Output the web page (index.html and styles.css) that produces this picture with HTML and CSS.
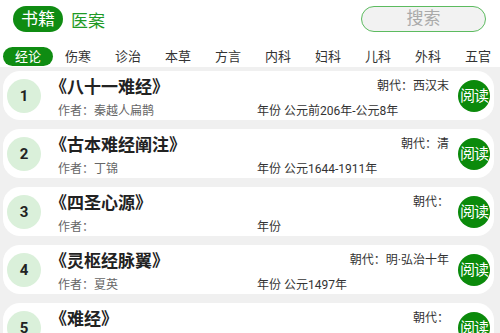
FILE: index.html
```html
<!DOCTYPE html>
<html lang="zh-CN">
<head>
    <meta charset="UTF-8">
    <meta name="viewport" content="width=device-width, initial-scale=1.0">
    <title>书籍</title>
    <link rel="stylesheet" href="styles.css">
</head>
<body>
    <div class="top">
        <div class="cat-on">书籍</div>
        <div class="cat">医案</div>
        <div class="search">搜索</div>
    </div>

    <div class="tabs">
        <div class="tab on">经论</div>
        <div class="tab">伤寒</div>
        <div class="tab">诊治</div>
        <div class="tab">本草</div>
        <div class="tab">方言</div>
        <div class="tab">内科</div>
        <div class="tab">妇科</div>
        <div class="tab">儿科</div>
        <div class="tab">外科</div>
        <div class="tab">五官</div>
    </div>

    <div class="list">
        <div class="card">
            <div class="num">1</div>
            <div class="info">
                <div class="title">《八十一难经》</div>
                <div class="dynasty">朝代：西汉末</div>
                <div class="author">作者：秦越人扁鹊</div>
                <div class="year">年份 公元前206年-公元8年</div>
            </div>
            <div class="read">阅读</div>
        </div>
        <div class="card">
            <div class="num">2</div>
            <div class="info">
                <div class="title">《古本难经阐注》</div>
                <div class="dynasty">朝代：清</div>
                <div class="author">作者：丁锦</div>
                <div class="year">年份 公元1644-1911年</div>
            </div>
            <div class="read">阅读</div>
        </div>
        <div class="card">
            <div class="num">3</div>
            <div class="info">
                <div class="title">《四圣心源》</div>
                <div class="dynasty">朝代：</div>
                <div class="author">作者：</div>
                <div class="year">年份</div>
            </div>
            <div class="read">阅读</div>
        </div>
        <div class="card">
            <div class="num">4</div>
            <div class="info">
                <div class="title">《灵枢经脉翼》</div>
                <div class="dynasty">朝代：明·弘治十年</div>
                <div class="author">作者：夏英</div>
                <div class="year">年份 公元1497年</div>
            </div>
            <div class="read">阅读</div>
        </div>
        <div class="card">
            <div class="num">5</div>
            <div class="info">
                <div class="title">《难经》</div>
                <div class="dynasty">朝代：</div>
                <div class="author">作者：</div>
                <div class="year">年份</div>
            </div>
            <div class="read">阅读</div>
        </div>
    </div>
</body>
</html>
```

FILE: styles.css
```css
body {
    margin: 0;
    width: 500px;
    height: 333px;
    overflow: hidden;
    background: #fff;
    font-family: Roboto, "Noto Sans CJK SC", sans-serif;
    color: #333;
}

/* top bar */
.top {
    display: flex;
    align-items: center;
    height: 26px;
    margin-top: 6px;
    padding: 0 14px 0 13px;
}
.cat-on {
    width: 50px;
    height: 26px;
    line-height: 26px;
    border-radius: 13px;
    background: #0f8c12;
    color: #fff;
    font-size: 17px;
    text-align: center;
}
.cat {
    margin-left: 8px;
    font-size: 17px;
    color: #1f9a26;
}
.search {
    margin-left: auto;
    width: 125px;
    height: 26px;
    line-height: 23px;
    box-sizing: border-box;
    border: 1.5px solid #5cbb5f;
    border-radius: 13px;
    background: #f2f2f2;
    color: #aaa;
    font-size: 17px;
    text-align: center;
}

/* category tabs */
.tabs {
    display: flex;
    margin: 15px 0 1px;
    padding-left: 3px;
    height: 19px;
    overflow: hidden;
}
.tab {
    flex: 0 0 50px;
    height: 19px;
    line-height: 19px;
    font-size: 13px;
    text-align: center;
    color: #333;
}
.tab.on {
    background: #0f8c12;
    color: #fff;
    border-radius: 10px;
}

/* book list */
.list {
    background: #f0f0f0;
    padding: 4px 6px 20px 3px;
    display: flex;
    flex-direction: column;
    gap: 9px;
}
.card {
    display: flex;
    align-items: center;
    height: 49px;
    padding: 0 3px 0 4px;
    background: #fff;
    border-radius: 17px;
}
.num {
    flex: 0 0 34px;
    height: 34px;
    line-height: 34px;
    border-radius: 50%;
    background: #daf0da;
    text-align: center;
    font-size: 15px;
    font-weight: bold;
    color: #222;
}
.info {
    align-self: stretch;
    margin-left: 14px;
    width: 394px;
    box-sizing: border-box;
    padding-top: 4px;
    display: grid;
    grid-template-columns: 202px 1fr;
    grid-template-rows: 24px 16px;
    row-gap: 4px;
}
.title {
    font-size: 17px;
    font-weight: bold;
    line-height: 24px;
    color: #222;
    margin-left: -5px;
}
.dynasty {
    font-size: 12px;
    line-height: 22px;
    text-align: right;
    color: #333;
}
.author {
    font-size: 12px;
    line-height: 16px;
    color: #666;
    padding-left: 3px;
}
.year {
    font-size: 12px;
    line-height: 16px;
    color: #333;
}
.read {
    flex: 0 0 32px;
    height: 32px;
    line-height: 32px;
    margin-left: 9px;
    border-radius: 50%;
    background: #0b8a0b;
    color: #fff;
    font-size: 15px;
    text-align: center;
    letter-spacing: -1px;
}
```
